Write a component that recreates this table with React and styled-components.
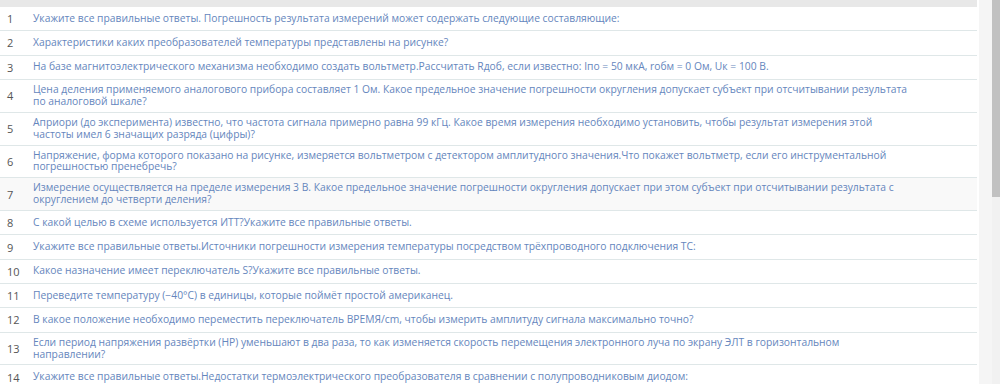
import styled, { createGlobalStyle } from 'styled-components';

const GlobalStyle = createGlobalStyle`
    html, body {
        margin: 0;
        padding: 0;
        background: #ffffff;
        overflow: hidden;
    }
`;

const Page = styled.div`
    display: flex;
    height: 384px;
    width: 1000px;
    overflow: hidden;
    font-family: "Open Sans", "Liberation Sans", sans-serif;
`;

const TableWrap = styled.div`
    width: 977px;
    flex-shrink: 0;
`;

const Gutter = styled.div`
    width: 2px;
    background: #ffffff;
`;

const Side = styled.div`
    flex: 1;
    background: #f5f5f5;
`;

const Scrollbar = styled.div`
    width: 8px;
    background: #f1f1f1;
    display: flex;
    flex-direction: column;
`;

const Thumb = styled.div`
    height: 197px;
    background: #c1c1c1;
`;

const HeaderBar = styled.div`
    height: 7px;
    background: #e8e8e8;
`;

const Row = styled.div`
    display: flex;
    align-items: center;
    min-height: 23.3px;
    border-bottom: 1px solid #dfe7e8;
    background: ${p => (p.$hover ? '#f9f9f9' : '#ffffff')};
`;

const Num = styled.div`
    width: 26px;
    padding-left: 7px;
    flex-shrink: 0;
    font-size: 11px;
    color: #555555;
`;

const Question = styled.div`
    width: 877px;
    padding: 4px 0;
    font-size: 10.3px;
    line-height: 11.9px;
    color: #6586bd;
`;

const questions = [
    'Укажите все правильные ответы. Погрешность результата измерений может содержать следующие составляющие:',
    'Характеристики каких преобразователей температуры представлены на рисунке?',
    'На базе магнитоэлектрического механизма необходимо создать вольтметр.Рассчитать Rдоб, если известно: Iпо = 50 мкА, rобм = 0 Ом, Uк = 100 В.',
    'Цена деления применяемого аналогового прибора составляет 1 Ом. Какое предельное значение погрешности округления допускает субъект при отсчитывании результата по аналоговой шкале?',
    'Априори (до эксперимента) известно, что частота сигнала примерно равна 99 кГц. Какое время измерения необходимо установить, чтобы результат измерения этой частоты имел 6 значащих разряда (цифры)?',
    'Напряжение, форма которого показано на рисунке, измеряется вольтметром с детектором амплитудного значения.Что покажет вольтметр, если его инструментальной погрешностью пренебречь?',
    'Измерение осуществляется на пределе измерения 3 В. Какое предельное значение погрешности округления допускает при этом субъект при отсчитывании результата с округлением до четверти деления?',
    'С какой целью в схеме используется ИТТ?Укажите все правильные ответы.',
    'Укажите все правильные ответы.Источники погрешности измерения температуры посредством трёхпроводного подключения ТС:',
    'Какое назначение имеет переключатель S?Укажите все правильные ответы.',
    'Переведите температуру (−40°C) в единицы, которые поймёт простой американец.',
    'В какое положение необходимо переместить переключатель ВРЕМЯ/cm, чтобы измерить амплитуду сигнала максимально точно?',
    'Если период напряжения развёртки (НР) уменьшают в два раза, то как изменяется скорость перемещения электронного луча по экрану ЭЛТ в горизонтальном направлении?',
    'Укажите все правильные ответы.Недостатки термоэлектрического преобразователя в сравнении с полупроводниковым диодом:',
];

const App = () => (
    <Page>
        <GlobalStyle />
        <TableWrap>
            <HeaderBar />
            {questions.map((q, i) => (
                <Row key={i} $hover={i === 6}>
                    <Num>{i + 1}</Num>
                    <Question>{q}</Question>
                </Row>
            ))}
        </TableWrap>
        <Gutter />
        <Side />
        <Scrollbar>
            <Thumb />
        </Scrollbar>
    </Page>
);

export default App;
